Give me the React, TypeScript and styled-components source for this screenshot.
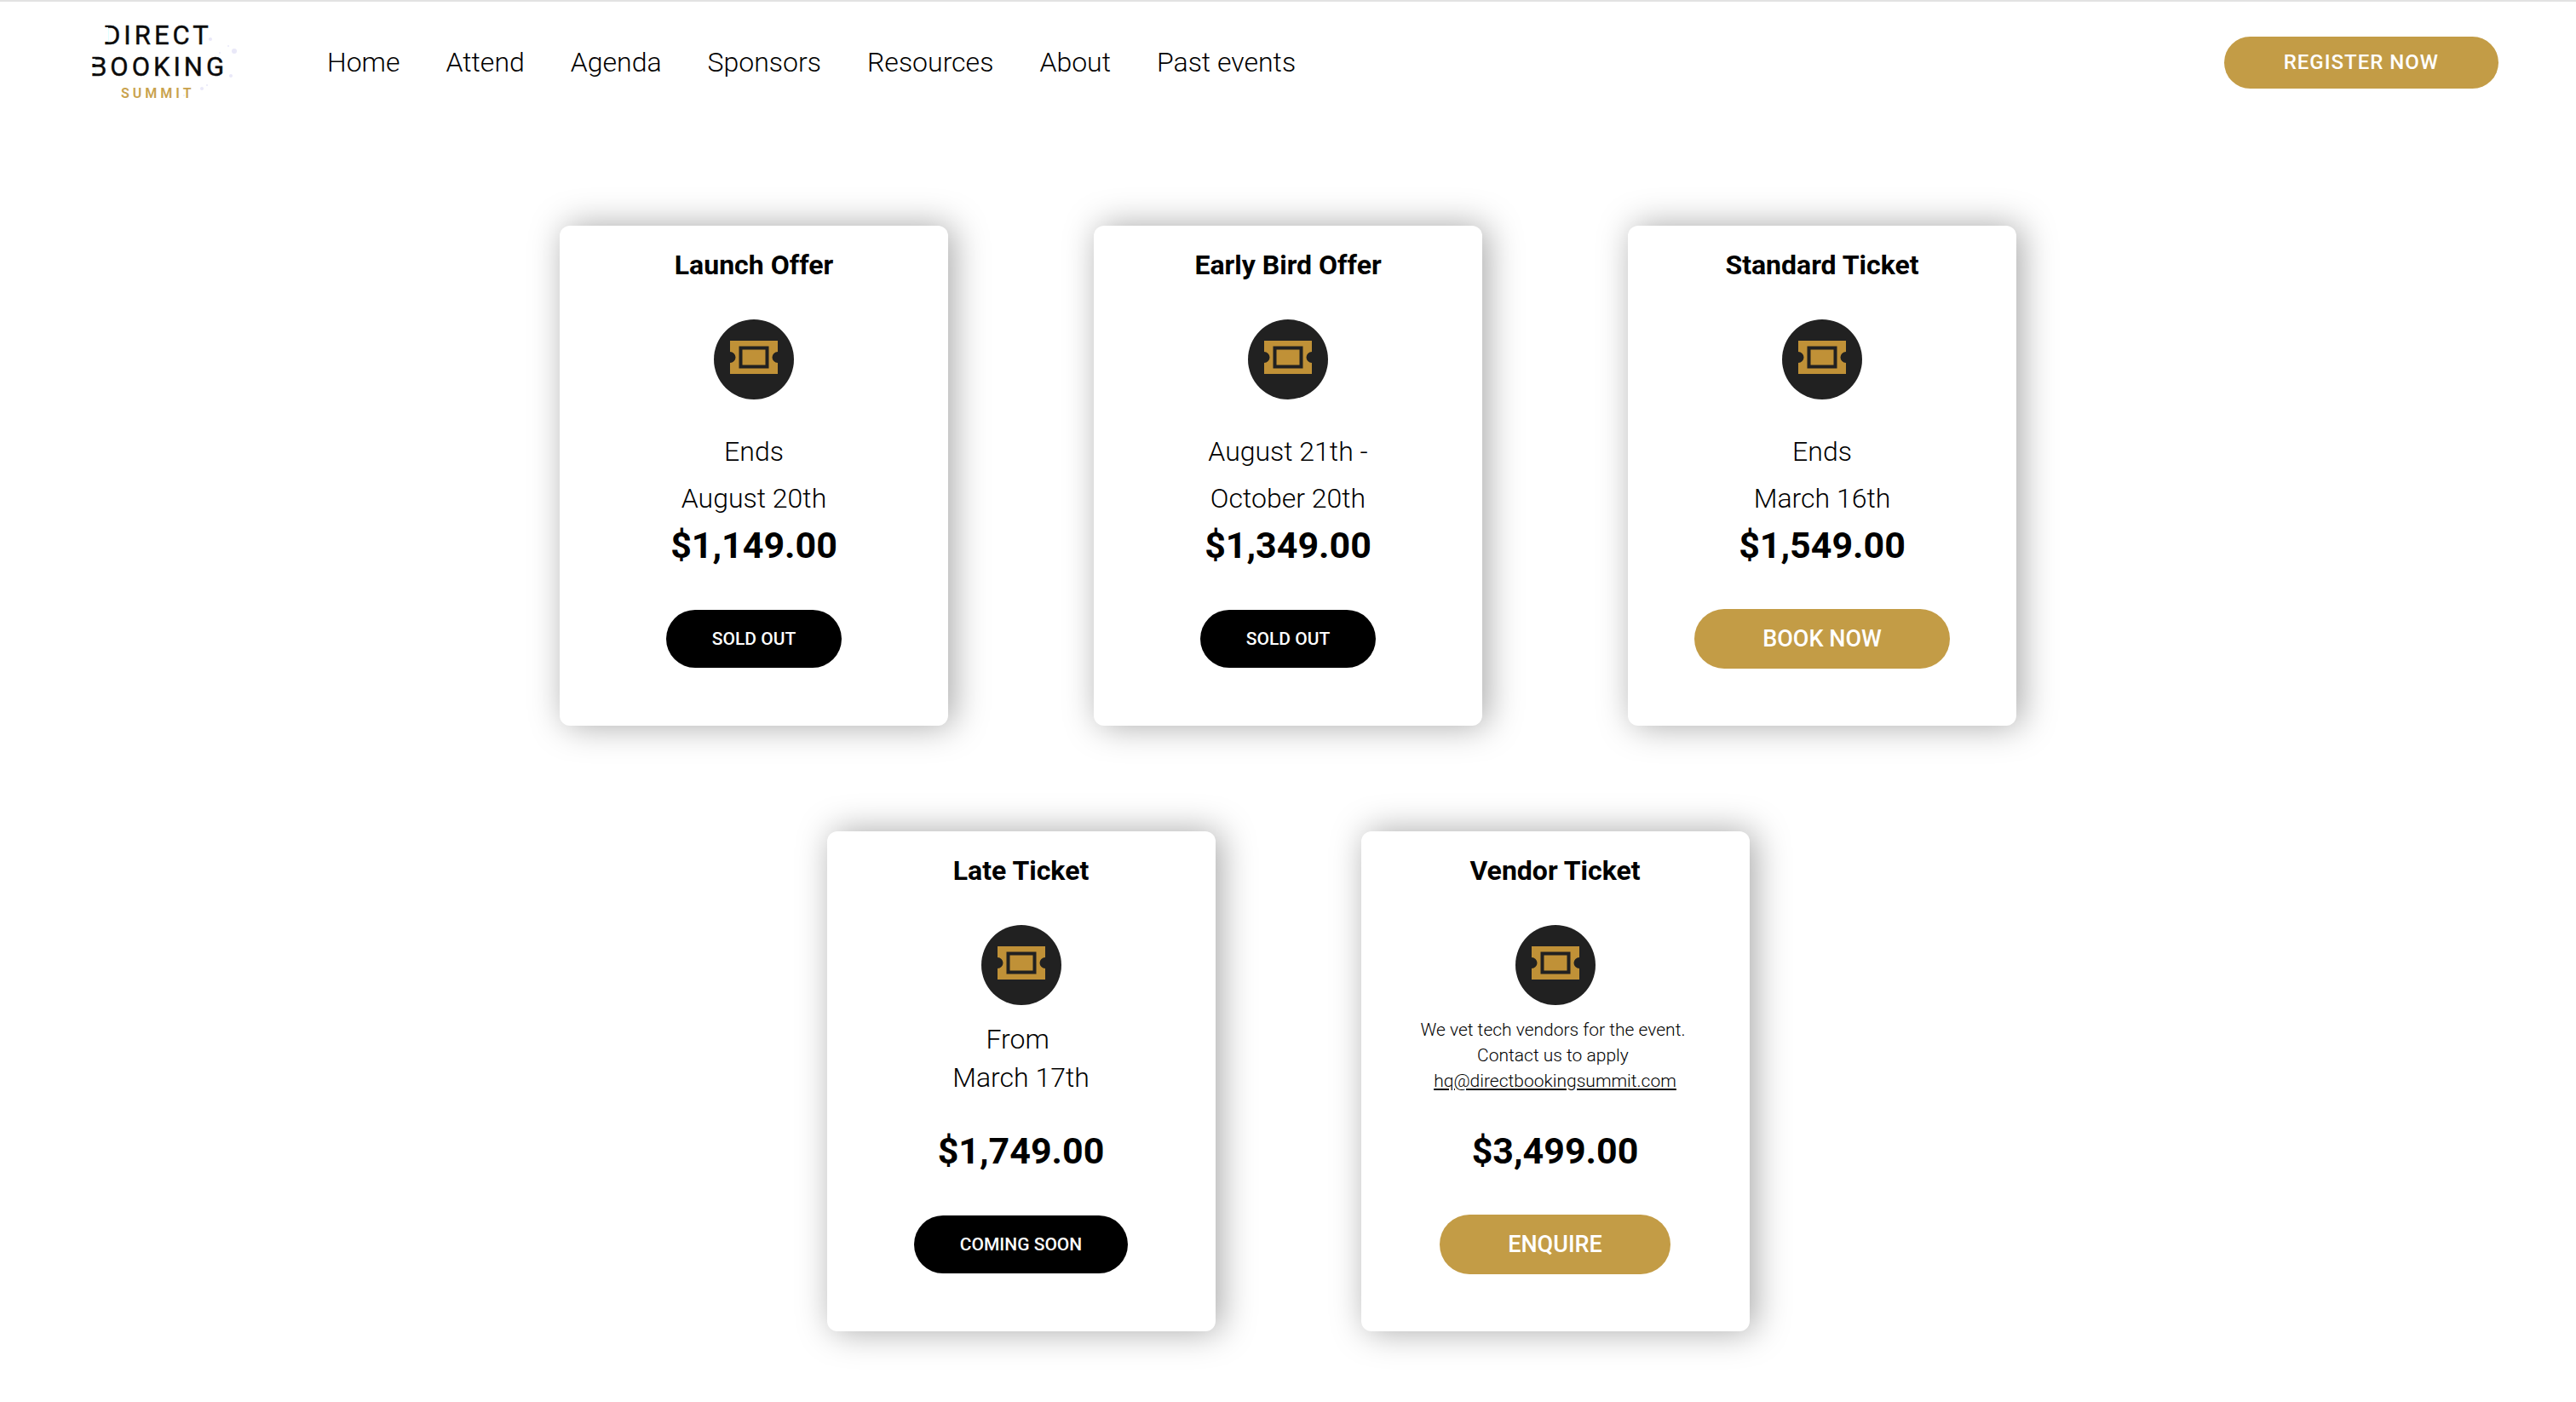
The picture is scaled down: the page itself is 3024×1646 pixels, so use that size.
import React from "react";
import styled, { createGlobalStyle, css } from "styled-components";

const GOLD = "#c39c46";

const GlobalStyle = createGlobalStyle`
  * { box-sizing: border-box; }
  body {
    margin: 0;
    background: #fff;
    color: #000;
    font-family: Roboto, "Liberation Sans", sans-serif;
  }
`;

const Header = styled.header`
  display: flex;
  align-items: center;
  border-top: 2px solid #e2e2e2;
  padding: 0 91px 0 104px;
  height: 144px;
`;

const LogoLink = styled.a`
  display: block;
  width: 176px;
  height: 112px;
  margin-right: 104px;
`;

const LogoWord = styled.text`
  font-size: 31px;
  font-weight: 400;
  letter-spacing: 4px;
  fill: #0b0b0b;
  stroke: #0b0b0b;
  stroke-width: 0.4px;
`;

const LogoTag = styled.text`
  font-size: 16px;
  font-weight: 600;
  letter-spacing: 4px;
  fill: #c9a24d;
`;

const Nav = styled.nav`
  display: flex;
  flex: 1;
  gap: 54px;
`;

const NavLink = styled.a`
  color: inherit;
  font-size: 32px;
  font-weight: 300;
  line-height: 40px;
  text-decoration: none;
`;

const pill = css`
  display: block;
  border: 0;
  border-radius: 36px;
  font-family: inherit;
  font-weight: 500;
  color: #fff;
  cursor: pointer;
`;

const RegisterButton = styled.button`
  ${pill}
  height: 61px;
  padding: 0 70px;
  background: ${GOLD};
  font-size: 24px;
  letter-spacing: 1px;
`;

const TicketButton = styled.button<{ $open: boolean }>`
  ${pill}
  height: ${(p) => (p.$open ? 70 : 68)}px;
  padding: 0 ${(p) => (p.$open ? 80 : 54)}px;
  background: ${(p) => (p.$open ? GOLD : "#000")};
  font-size: ${(p) => (p.$open ? 27 : 21)}px;
  cursor: ${(p) => (p.$open ? "pointer" : "default")};
`;

const Tickets = styled.main`
  display: flex;
  flex-wrap: wrap;
  justify-content: center;
  gap: 124px 171px;
  max-width: 1710px;
  margin: 0 auto;
  padding: 121px 0 80px;
`;

const Card = styled.article`
  display: flex;
  flex-direction: column;
  align-items: center;
  width: 456px;
  padding: 26px 24px 66px;
  border-radius: 12px;
  background: #fff;
  box-shadow: 6px 0 40px rgba(0, 0, 0, 0.35);
  text-align: center;
`;

const CardTitle = styled.h2`
  margin: 0 0 44px;
  font-size: 32px;
  font-weight: 700;
  line-height: 40px;
`;

const Details = styled.p<{ $size: "loose" | "normal" | "small" }>`
  min-height: 146px;
  margin: 0;
  padding-top: ${(p) => ({ loose: 34, normal: 18, small: 14 })[p.$size]}px;
  font-size: ${(p) => (p.$size === "small" ? 21 : 32)}px;
  font-weight: 300;
  line-height: ${(p) => ({ loose: 55, normal: 45, small: 30 })[p.$size]}px;
  white-space: pre-line;
`;

const MailLink = styled.a`
  color: inherit;
  text-decoration: underline;
`;

const Price = styled.p`
  margin: 0 0 49px;
  font-size: 43px;
  font-weight: 700;
  line-height: 50px;
`;

const Action = styled.div`
  display: flex;
  align-items: center;
  height: 72px;
`;

function Logo() {
  return (
    <LogoLink href="#" aria-label="Direct Booking Summit">
      <svg width="176" height="112" viewBox="104 17 176 112" aria-hidden="true">
        <LogoWord x="121" y="52">DIRECT</LogoWord>
        <LogoWord x="106" y="89">BOOKING</LogoWord>
        <rect x="119" y="32" width="8" height="17" fill="#fff" />
        <rect x="105" y="69" width="7" height="6" fill="#fff" />
        <rect x="105" y="79" width="7" height="7" fill="#fff" />
        <LogoTag x="142" y="115">SUMMIT</LogoTag>
        <g fill="#e9e8f8">
          <circle cx="247" cy="46" r="2" />
          <circle cx="268" cy="54" r="1" />
          <circle cx="275" cy="60" r="3" />
          <circle cx="258" cy="62" r="1" />
          <circle cx="271" cy="89" r="2" />
          <circle cx="237" cy="104" r="2" />
          <circle cx="243" cy="100" r="1" />
          <circle cx="216" cy="112" r="1" />
          <circle cx="187" cy="90" r="1" />
        </g>
      </svg>
    </LogoLink>
  );
}

function TicketIcon() {
  return (
    <svg width="94" height="94" viewBox="0 0 94 94" aria-hidden="true">
      <circle cx="47" cy="47" r="47" fill="#212121" />
      <path
        d="M19 25H75V38A6.5 6.5 0 0 0 75 51V64H19V51A6.5 6.5 0 0 0 19 38Z"
        fill="#c09137"
      />
      <rect x="31.5" y="33.5" width="31" height="22" fill="#c09137" stroke="#212121" strokeWidth="4" />
    </svg>
  );
}

type Ticket = {
  title: string;
  size: "loose" | "normal" | "small";
  details: React.ReactNode;
  price: string;
  action: string;
  open: boolean;
};

const tickets: Ticket[] = [
  { title: "Launch Offer", size: "loose", details: "Ends\nAugust 20th", price: "$1,149.00", action: "SOLD OUT", open: false },
  { title: "Early Bird Offer", size: "loose", details: "August 21th -\nOctober 20th", price: "$1,349.00", action: "SOLD OUT", open: false },
  { title: "Standard Ticket", size: "loose", details: "Ends\nMarch 16th", price: "$1,549.00", action: "BOOK NOW", open: true },
  { title: "Late Ticket", size: "normal", details: "From\u00a0\nMarch 17th", price: "$1,749.00", action: "COMING SOON", open: false },
  {
    title: "Vendor Ticket",
    size: "small",
    details: (
      <>
        {"We vet tech vendors for the event.\u00a0\nContact us to apply\u00a0\n"}
        <MailLink href="mailto:hq@directbookingsummit.com">hq@directbookingsummit.com</MailLink>
      </>
    ),
    price: "$3,499.00",
    action: "ENQUIRE",
    open: true,
  },
];

const links = ["Home", "Attend", "Agenda", "Sponsors", "Resources", "About", "Past events"];

export default function App() {
  return (
    <>
      <GlobalStyle />
      <Header>
        <Logo />
        <Nav>
          {links.map((label) => (
            <NavLink href="#" key={label}>{label}</NavLink>
          ))}
        </Nav>
        <RegisterButton type="button">REGISTER NOW</RegisterButton>
      </Header>
      <Tickets>
        {tickets.map((t) => (
          <Card key={t.title}>
            <CardTitle>{t.title}</CardTitle>
            <TicketIcon />
            <Details $size={t.size}>{t.details}</Details>
            <Price>{t.price}</Price>
            <Action>
              <TicketButton type="button" $open={t.open}>{t.action}</TicketButton>
            </Action>
          </Card>
        ))}
      </Tickets>
    </>
  );
}
